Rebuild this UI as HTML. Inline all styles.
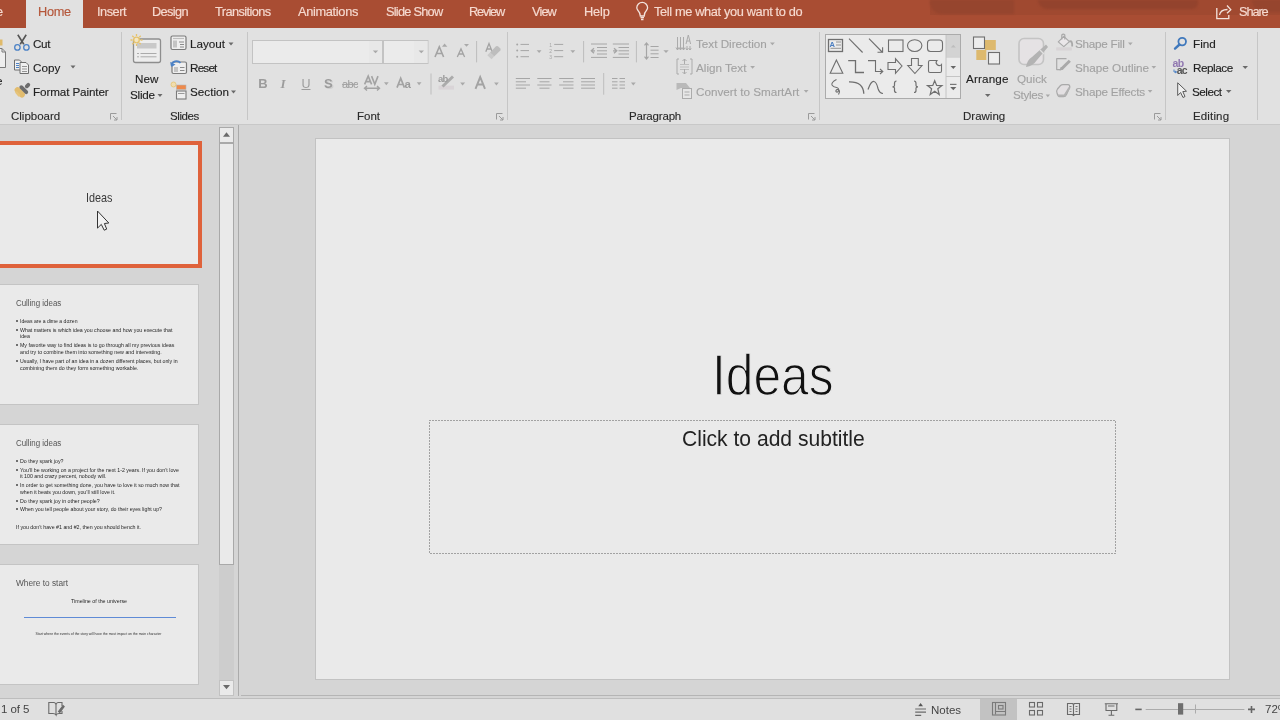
<!DOCTYPE html>
<html><head><meta charset="utf-8">
<style>
*{box-sizing:border-box}
html,body{margin:0;padding:0}
body{width:1280px;height:720px;overflow:hidden;position:relative;background:#D5D5D5;font-family:"Liberation Sans",sans-serif;color:#262626}
.a{position:absolute}
.t{position:absolute;white-space:nowrap;line-height:1}
#tabs{left:0;top:0;width:1280px;height:28px;background:#A94D33}
.tab{position:absolute;top:5.5px;font-size:12.8px;-webkit-text-stroke:0.15px;color:#F6DAD0;white-space:nowrap;line-height:1}
#ribbon{left:0;top:28px;width:1280px;height:96px;background:#E1E1E1}
.sep{position:absolute;top:32px;width:1px;height:88px;background:#C6C6C6}
.gl{position:absolute;top:111px;font-size:11.5px;color:#2A2A2A;white-space:nowrap;line-height:1;-webkit-text-stroke:0.12px}
.rl{position:absolute;font-size:11.7px;color:#222;white-space:nowrap;line-height:1;-webkit-text-stroke:0.12px}
.dis{color:#A2A2A2}
.dd{position:absolute;width:0;height:0;border-left:2.5px solid transparent;border-right:2.5px solid transparent;border-top:3px solid #6A6A6A}
.dd.g{border-top-color:#B5B5B5}
.launch{position:absolute;top:113px;width:8px;height:8px}
svg{position:absolute;overflow:visible}
#root{position:absolute;left:0;top:0;width:1280px;height:720px;overflow:hidden;background:#D5D5D5;will-change:transform}
</style></head>
<body>
<div id="root">
<!-- TAB BAR -->
<div id="tabs" class="a">
  <div class="a" style="left:930px;top:0;width:350px;height:15px;background:#A04930;filter:blur(0.6px)"></div>
  <div class="a" style="left:930px;top:0;width:84px;height:14px;background:#96452E;border-radius:0 0 0 12px;filter:blur(0.8px)"></div>
  <div class="a" style="left:1038px;top:0;width:160px;height:9px;background:#93432D;border-radius:0 0 40px 60px;filter:blur(0.8px)"></div>
  <div class="a" style="left:1252px;top:0;width:30px;height:12px;background:#96452E;border-radius:0 0 0 14px;filter:blur(0.8px)"></div>
  <div class="tab" style="left:-4px">e</div>
  <div class="a" style="left:26px;top:0;width:57px;height:28px;background:#E1E1E1"></div>
  <div class="tab" style="left:38px;color:#B5573B;letter-spacing:-0.36px">Home</div>
  <div class="tab" style="left:97px;letter-spacing:-0.49px">Insert</div>
  <div class="tab" style="left:152px;letter-spacing:-0.64px">Design</div>
  <div class="tab" style="left:215px;letter-spacing:-0.59px">Transitions</div>
  <div class="tab" style="left:298px;letter-spacing:-0.33px">Animations</div>
  <div class="tab" style="left:386px;letter-spacing:-0.76px">Slide Show</div>
  <div class="tab" style="left:469px;letter-spacing:-1.12px">Review</div>
  <div class="tab" style="left:532px;letter-spacing:-0.88px">View</div>
  <div class="tab" style="left:584px;letter-spacing:-0.14px">Help</div>
  <div class="tab" style="left:654px;letter-spacing:-0.36px">Tell me what you want to do</div>
  <div class="tab" style="left:1239px;letter-spacing:-1.12px">Share</div>
</div>
<!-- RIBBON -->
<div id="ribbon" class="a"></div>
<div class="a" style="left:0;top:124px;width:1280px;height:1px;background:#C8C8C8"></div>

<div class="sep" style="left:121px"></div>
<div class="sep" style="left:247px"></div>
<div class="sep" style="left:507px"></div>
<div class="sep" style="left:819px"></div>
<div class="sep" style="left:1165px"></div>
<div class="sep" style="left:1257px"></div>

<div class="gl" style="left:11px">Clipboard</div>
<div class="gl" style="left:170px;letter-spacing:-0.4px">Slides</div>
<div class="gl" style="left:357px">Font</div>
<div class="gl" style="left:629px;letter-spacing:-0.18px">Paragraph</div>
<div class="gl" style="left:963px">Drawing</div>
<div class="gl" style="left:1193px;letter-spacing:0.15px">Editing</div>

<div class="rl" style="left:-4px;top:75px">e</div>
<div class="rl" style="left:33px;top:38px;letter-spacing:-0.4px">Cut</div>
<div class="rl" style="left:33px;top:62px">Copy</div>
<div class="rl" style="left:33px;top:86px;letter-spacing:-0.12px">Format Painter</div>
<div class="rl" style="left:135px;top:73px">New</div>
<div class="rl" style="left:130px;top:89px;letter-spacing:-0.25px">Slide</div>
<div class="rl" style="left:190px;top:38px">Layout</div>
<div class="rl" style="left:190px;top:62px;letter-spacing:-0.8px">Reset</div>
<div class="rl" style="left:190px;top:86px">Section</div>
<div class="rl dis" style="left:696px;top:38px">Text Direction</div>
<div class="rl dis" style="left:696px;top:62px">Align Text</div>
<div class="rl dis" style="left:696px;top:86px">Convert to SmartArt</div>
<div class="rl" style="left:966px;top:73px;letter-spacing:0.15px">Arrange</div>
<div class="rl dis" style="left:1017px;top:73px">Quick</div>
<div class="rl dis" style="left:1013px;top:89px;letter-spacing:-0.3px">Styles</div>
<div class="rl dis" style="left:1075px;top:38px;letter-spacing:-0.25px">Shape Fill</div>
<div class="rl dis" style="left:1075px;top:62px">Shape Outline</div>
<div class="rl dis" style="left:1075px;top:86px;letter-spacing:-0.2px">Shape Effects</div>
<div class="rl" style="left:1193px;top:38px">Find</div>
<div class="rl" style="left:1193px;top:62px;letter-spacing:-0.45px">Replace</div>
<div class="rl" style="left:1192px;top:86px;letter-spacing:-0.5px">Select</div>


<!-- RIBBON ICONS -->
<svg class="a" style="left:0;top:0" width="1280" height="720" viewBox="0 0 1280 720">
<g fill="none" stroke-linecap="butt">
<!-- paste (clipped) -->
<rect x="-4" y="39.5" width="6.5" height="6" fill="#E0BA6A"/>
<path d="M-3 48.5 H2 L5.5 52 V67.5 H-3 Z" fill="#EEEEEE" stroke="#7A7A7A" stroke-width="1"/>
<path d="M2 48.5 V52 H5.5" stroke="#7A7A7A" stroke-width="1"/>
<!-- scissors -->
<path d="M17.8 34.8 L23.8 44.2 M26.2 34.8 L20.2 44.2" stroke="#555" stroke-width="1.6"/>
<circle cx="17.4" cy="47.4" r="2.7" stroke="#4C82C6" stroke-width="1.3"/>
<circle cx="26.4" cy="47.4" r="2.7" stroke="#4C82C6" stroke-width="1.3"/>
<!-- copy -->
<path d="M14.5 60 H19.5 L21.5 62 V70 H14.5 Z" fill="#F0F0F0" stroke="#6E6E6E" stroke-width="1"/>
<path d="M16 63.5 H19 M16 65.5 H19 M16 67.5 H19" stroke="#4C82C6" stroke-width="1"/>
<path d="M20 62.5 H26 L28.5 65 V73.5 H20 Z" fill="#F0F0F0" stroke="#6E6E6E" stroke-width="1"/>
<path d="M22 66.5 H27 M22 69 H27 M22 71.5 H27" stroke="#7E7E7E" stroke-width="0.8"/>
<!-- format painter -->
<path d="M17.5 90 L22 94.6" stroke="#E2BC6E" stroke-width="5.8" stroke-linecap="round"/>
<path d="M16.5 92.5 L19 95.3" stroke="#E6C47C" stroke-width="2.5" stroke-linecap="round"/>
<path d="M21.3 87.2 L26.3 92.2" stroke="#6C6C6C" stroke-width="3.8" stroke-linecap="round"/>
<path d="M26.8 86.3 L28.3 84.8" stroke="#6C6C6C" stroke-width="3.8" stroke-linecap="round"/>
<!-- dialog launchers -->
<g stroke="#9A9A9A" stroke-width="1">
<path d="M110.5 119.5 V113.5 H116.5 M113 116 L117 120 M117 117 V120 H114"/>
<path d="M496.5 119.5 V113.5 H502.5 M499 116 L503 120 M503 117 V120 H500"/>
<path d="M808.5 119.5 V113.5 H814.5 M811 116 L815 120 M815 117 V120 H812"/>
<path d="M1154.5 119.5 V113.5 H1160.5 M1157 116 L1161 120 M1161 117 V120 H1158"/>
</g>
<!-- new slide -->
<rect x="133.5" y="39" width="27" height="23.5" rx="2" fill="#EDEDED" stroke="#8E8E8E" stroke-width="1.3"/>
<rect x="137" y="43" width="19.5" height="5.5" fill="#C9C9C9"/>
<path d="M137 53.5 H139 M140.5 53.5 H156.5 M137 56.8 H139 M140.5 56.8 H156.5" stroke="#ABABAB" stroke-width="1"/>
<g stroke="#E6C36C" stroke-width="1.3">
<circle cx="136.5" cy="40" r="2.8" fill="#F3E6C3"/>
<path d="M136.5 34 V36 M136.5 44 V46 M130.5 40 H132.5 M140.5 40 H142.5 M132.3 35.8 L133.7 37.2 M139.3 42.8 L140.7 44.2 M140.7 35.8 L139.3 37.2 M133.7 42.8 L132.3 44.2"/>
</g>
<!-- layout -->
<rect x="171" y="36" width="15" height="13.5" rx="1.5" fill="#EFEFEF" stroke="#7A7A7A" stroke-width="1.2"/>
<path d="M173 38.5 H184" stroke="#BDBDBD" stroke-width="1.2"/>
<rect x="173" y="40.5" width="4" height="7" fill="#C4C4C4"/>
<path d="M179 42 H184 M180 44.5 H184 M180 47 H184" stroke="#8A8A8A" stroke-width="1"/>
<!-- reset -->
<rect x="172" y="62" width="14.5" height="11.5" rx="1.5" fill="#EFEFEF" stroke="#7A7A7A" stroke-width="1.2"/>
<rect x="174" y="67" width="4" height="5" fill="#C4C4C4"/>
<path d="M180 67.5 H184.5 M180 70.5 H184.5" stroke="#8A8A8A" stroke-width="1"/>
<path d="M171.5 65.5 A5 4.5 0 0 1 180.5 63" stroke="#4C82C6" stroke-width="1.8" fill="none"/>
<path d="M170 62 L171.5 67 L175.5 64.5 Z" fill="#4C82C6"/>
<!-- section -->
<circle cx="173.5" cy="84.5" r="2.5" fill="#F0DDB0" stroke="#E6C36C" stroke-width="0.8"/>
<rect x="176.5" y="85" width="9.5" height="4.5" fill="#EE8A4C" stroke="#B5B5B5" stroke-width="0.6"/>
<rect x="176.5" y="91" width="9.5" height="8" fill="#EFEFEF" stroke="#7A7A7A" stroke-width="1.1"/>
<path d="M178 93.5 H184.5" stroke="#9A9A9A" stroke-width="1"/>
</g>
<!-- dropdown arrows enabled -->
<g fill="#6A6A6A">
<path d="M70.5 65.5 H75.5 L73 68.5 Z"/>
<path d="M157.5 94 H162.5 L160 97 Z"/>
<path d="M228.5 42.5 H233.5 L231 45.5 Z"/>
<path d="M231 90.5 H236 L233.5 93.5 Z"/>
<path d="M985 94 H990.5 L987.7 97 Z"/>
<path d="M1242.5 66 H1248 L1245.2 69 Z"/>
<path d="M1226 90 H1231.5 L1228.7 93 Z"/>
</g>
</svg>


<!-- FONT GROUP -->
<svg class="a" style="left:0;top:0" width="1280" height="720" viewBox="0 0 1280 720">
<rect x="252.5" y="40.5" width="130" height="23" fill="#EBEBEB" stroke="#C3C3C3" stroke-width="1"/>
<rect x="369" y="41" width="13" height="22" fill="#E8E8E8"/>
<rect x="383.5" y="40.5" width="44.5" height="23" fill="#EBEBEB" stroke="#C3C3C3" stroke-width="1"/>
<rect x="414" y="41" width="13.5" height="22" fill="#E8E8E8"/>
<g fill="#A9A9A9">
<path d="M372.8 50.5 H378.2 L375.5 53.3 Z"/>
<path d="M418.6 50.5 H424 L421.3 53.3 Z"/>
<path d="M442 46.8 L444.6 43.6 L447.3 46.8 Z"/>
<path d="M464 43.9 H469 L466.5 46.8 Z"/>
<path d="M536.7 50.3 H541.5 L539.1 53 Z"/>
<path d="M570.4 50.3 H575.2 L572.8 53 Z"/>
<path d="M663.4 50.3 H668.7 L666 53 Z"/>
<path d="M384 82.2 H388.7 L386.3 85.3 Z"/>
<path d="M416.8 82.2 H421.5 L419.1 85.3 Z"/>
<path d="M460.2 82.4 H465.1 L462.6 85.5 Z"/>
<path d="M494.1 82.4 H498.8 L496.4 85.5 Z"/>
<path d="M631 82.4 H635.7 L633.3 85.5 Z"/>
<path d="M770 42.5 H774.8 L772.4 45.3 Z"/>
<path d="M750.2 66 H755 L752.6 68.8 Z"/>
<path d="M803.8 90 H808.5 L806.1 92.8 Z"/>
<path d="M1128 42.5 H1132.7 L1130.3 45.3 Z"/>
<path d="M1151.5 66 H1156.2 L1153.8 68.8 Z"/>
<path d="M1147.8 90 H1152.4 L1150.1 92.8 Z"/>
<path d="M1045.7 94.5 H1050 L1047.8 97.3 Z"/>
</g>
<g fill="none" stroke="#A3A3A3">
<path d="M435 57 L439.3 46.8 L443.6 57 M436.6 53.5 H442" stroke-width="1.6"/>
<path d="M457.3 57 L461 48.9 L464.6 57 M458.6 54 H463.4" stroke-width="1.3"/>
<path d="M476.6 41 V62.4" stroke="#BDBDBD" stroke-width="1"/>
<path d="M485.8 51.8 L489 43.6 L492.2 51.8 M487 49 H491" stroke-width="1.3"/>
<path d="M490 52.5 L496 46.3 Q497 45.5 498 46.3 L500.3 48.6 Q501 49.5 500.3 50.4 L494.2 56.6 Z" fill="#BDBDBD" stroke="none"/>
<path d="M487.3 55.2 L490 52.5 L494.2 56.6 L491.5 59.3 Z" fill="#CACACA" stroke="none"/>
<path d="M431 73.5 V94.5" stroke="#BDBDBD" stroke-width="1"/>
<path d="M364.6 84.4 L368.2 76.1 L371.6 84.4 M365.8 81.6 H370.4 M371.6 76.1 L374.8 84.4 L378 76.1" stroke-width="1.6"/>
<path d="M364.5 88.3 H379.5 M367 86 L364.5 88.3 L367 90.6 M377 86 L379.5 88.3 L377 90.6" stroke-width="1.4"/>
<path d="M397 87.6 L400.7 78.3 L404.4 87.6 M398.3 84.5 H403" stroke-width="1.7"/>
<path d="M438.5 87.6 H454" stroke="#D9D4D7" stroke-width="4"/>
<path d="M442.5 86.5 L453 76.5" stroke="#ABABAB" stroke-width="3"/>
<path d="M475.5 88.8 L480.2 77.1 L485 88.8 M477.2 84.5 H483.2" stroke-width="1.9"/>
</g>
<g font-family="Liberation Sans" fill="#9C9C9C">
<text x="258.3" y="87.7" font-size="13" font-weight="bold">B</text>
<text x="280.5" y="87.7" font-size="13" font-style="italic" font-weight="bold" font-family="Liberation Serif">I</text>
<text x="301.5" y="87.7" font-size="12.5">U</text>
<text x="325.2" y="89.3" font-size="13" font-weight="bold" fill="#CFCFCF">S</text><text x="324" y="88" font-size="13" font-weight="bold">S</text>
<text x="342" y="87.6" font-size="11" letter-spacing="-0.6">abc</text>
<text x="404.6" y="87.6" font-size="11.5" font-weight="bold">a</text>
<text x="438" y="82.4" font-size="9.5" font-weight="bold" letter-spacing="-0.8">ab</text>
</g>
<path d="M301.5 89.5 H310.5" stroke="#9C9C9C" stroke-width="1"/>
<path d="M342 84.4 H358" stroke="#A3A3A3" stroke-width="1"/>
<!-- paragraph -->
<g fill="#A6A6A6">
<circle cx="517.2" cy="44.4" r="1"/><circle cx="517.2" cy="50.6" r="1"/><circle cx="517.2" cy="56.7" r="1"/>
</g>
<g stroke="#A6A6A6" stroke-width="1" fill="none">
<path d="M520.5 44.4 H529 M520.5 50.6 H529 M520.5 56.7 H529"/>
<path d="M554.2 44.4 H563.2 M554.2 50.6 H563.2 M554.2 56.7 H563.2"/>
<path d="M583.6 41 V62.4 M636.4 41 V62.4 M603.7 73 V94.7" stroke="#BDBDBD"/>
<path d="M591 44 H607 M597 47.5 H607 M597 50.8 H607 M597 54 H607 M591 57.4 H607"/>
<path d="M595 50.8 H591.5 M594 48.3 L591.3 50.8 L594 53.3" stroke-width="1.3"/>
<path d="M612.8 44 H629 M618.5 47.5 H629 M618.5 50.8 H629 M618.5 54 H629 M612.8 57.4 H629"/>
<path d="M613 50.8 H616.5 M614 48.3 L616.8 50.8 L614 53.3" stroke-width="1.3"/>
<path d="M650.5 46.5 H658.6 M650.5 50.2 H658.6 M650.5 53.8 H658.6 M650.5 57.5 H658.6"/>
<path d="M646.5 43 V59 M644.5 45.3 L646.5 43 L648.5 45.3 M644.5 56.7 L646.5 59 L648.5 56.7" stroke-width="1.2"/>
<path d="M515.8 78.5 H530 M515.8 81.8 H526 M515.8 85 H530 M515.8 88.2 H526"/>
<path d="M537.3 78.5 H551.5 M539.5 81.8 H549.5 M537.3 85 H551.5 M539.5 88.2 H549.5"/>
<path d="M559.2 78.5 H573.5 M563 81.8 H573.5 M559.2 85 H573.5 M563 88.2 H573.5"/>
<path d="M581.1 78.5 H595 M581.1 81.8 H595 M581.1 85 H595 M581.1 88.2 H595"/>
<path d="M612 78.5 H617.5 M612 81.8 H617.5 M612 85 H617.5 M612 88.2 H617.5 M619.5 78.5 H625 M619.5 81.8 H625 M619.5 85 H625 M619.5 88.2 H625"/>
</g>
<g font-family="Liberation Sans" fill="#A6A6A6" font-size="5">
<text x="549.2" y="46.5">1</text><text x="549.2" y="52.5">2</text><text x="549.2" y="58.5">3</text>
</g>
<!-- text direction / align text / smartart icons -->
<g stroke="#ABABAB" stroke-width="1" fill="none">
<path d="M677.5 37 V50 M680.5 37 V50 M683.5 37 V50 M676 47.5 L677.5 50 L679 47.5 M679 47.5 L680.5 50 L682 47.5 M682 47.5 L683.5 50 L685 47.5"/>
<path d="M686 44 L688.3 35 L690.6 44 M686.8 41 H689.8"/>
<path d="M687 46 V50 M690 46 V50 M685.8 48.3 L687 50 L688.2 48.3 M688.8 48.3 L690 50 L691.2 48.3"/>
<path d="M679 59 H677 V74 H679 M690 59 H692 V74 H690"/>
<path d="M680 64.5 H689 M680 67 H689 M680 69.5 H689" stroke="#BFBFBF"/>
<path d="M684.5 59 V64 M682.5 61 L684.5 59 L686.5 61 M684.5 69 V74 M682.5 72 L684.5 74 L686.5 72"/>
<rect x="682.5" y="88.5" width="9" height="10" fill="#E6E6E6"/>
<path d="M684.5 92 H689.5 M684.5 95 H689.5" />
</g>
<path d="M676.5 83 H686 L690 88 H681 L676.5 90 Z" fill="#B9B9B9"/>
</svg>


<!-- DRAWING / EDITING / TAB ICONS -->
<svg class="a" style="left:0;top:0" width="1280" height="720" viewBox="0 0 1280 720">
<rect x="825.5" y="34.5" width="135" height="64" fill="#EBEBEB" stroke="#ABABAB" stroke-width="1"/>
<rect x="946" y="35" width="14" height="21.5" fill="#D3D3D3"/>
<path d="M946 35 V98 M946 57 H960 M946 76.5 H960" stroke="#C4C4C4" stroke-width="1"/>
<path d="M950.8 47.5 L953.3 44.8 L955.8 47.5 Z" fill="#BDBDBD"/>
<path d="M950.5 66 H956 L953.3 69 Z" fill="#666"/>
<path d="M950 84.4 H956.5" stroke="#777" stroke-width="1.2"/>
<path d="M950.2 87 H956.3 L953.3 90.3 Z" fill="#666"/>
<g fill="none" stroke="#6F6F6F" stroke-width="1.1">
<rect x="828.5" y="39.5" width="14" height="12" stroke-width="1.3"/>
<path d="M836 42 H841 M836 45 H841 M830.5 48.3 H841" stroke="#8A8A8A" stroke-width="0.9"/>
<path d="M849 38.6 L862.6 52.5"/>
<path d="M869 38.6 L882.6 52.5 M877.5 52.3 H882.6 V47.2"/>
<rect x="888.5" y="40" width="14.5" height="11.5"/>
<ellipse cx="914.7" cy="45.6" rx="7.2" ry="5.9"/>
<rect x="927.5" y="40" width="15" height="11.5" rx="3"/>
<path d="M836.4 60 L830.2 73.2 H842.8 Z"/>
<path d="M848.2 60.6 H855.5 V72.5 H864" stroke-width="1.3"/>
<path d="M868 60.6 H875.5 V71.5 H882.5 M880 69 L882.8 71.5 L880 74"/>
<path d="M888 62.5 H895.5 V58.8 L902 66 L895.5 73.3 V69.5 H888 Z"/>
<path d="M911.5 58.5 H918.3 V65.5 H922 L914.9 73.5 L907.8 65.5 H911.5 Z"/>
<path d="M930 60.5 H937 A3 3 0 0 0 941.5 64.5 V71 Q941.5 72.5 940 72.5 H930 Q928.5 72.5 928.5 71 V62 Q928.5 60.5 930 60.5 Z"/>
<path d="M836.5 79.5 Q831 82.5 832 85 Q833 87 836.5 87.5 Q839 88 838.5 90.5 Q838 92.5 836.5 92 Q835 91 837 89.5 Q839.5 89 839.5 92 L838.5 94.5" stroke-width="1.1"/>
<path d="M849 81.8 Q863.5 81.5 863.8 93.8" stroke-width="1.3"/>
<path d="M868 89.5 Q871 81 874 81.5 Q876.5 82 878 88.5 Q879.5 93.5 883 93.5" stroke-width="1.2"/>
<path d="M896.5 81 Q894.5 81 894.5 83.5 V85.5 Q894.5 86.8 892.5 86.8 Q894.5 86.8 894.5 88 V90.5 Q894.5 92.5 896.5 92.5" stroke-width="1.2"/>
<path d="M914 81 Q916 81 916 83.5 V85.5 Q916 86.8 918 86.8 Q916 86.8 916 88 V90.5 Q916 92.5 914 92.5" stroke-width="1.2"/>
<path d="M934.7 80.6 L936.6 85.5 L941.9 85.6 L937.8 88.7 L939.2 94.6 L934.7 91.3 L930.2 94.6 L931.6 88.7 L927.5 85.6 L932.8 85.5 Z" stroke-width="1.2"/>
</g>
<text x="829.5" y="46.5" font-family="Liberation Sans" font-size="7.5" font-weight="bold" fill="#4A7DC0">A</text>
<!-- arrange -->
<rect x="984.8" y="40" width="11" height="10" fill="#DDB96E"/>
<rect x="976.3" y="50" width="10" height="10" fill="#DDB96E"/>
<rect x="973.5" y="37" width="11" height="11.5" fill="#EDEDED" stroke="#6E6E6E" stroke-width="1.1"/>
<rect x="988.5" y="52.5" width="11" height="11.5" fill="#EDEDED" stroke="#6E6E6E" stroke-width="1.1"/>
<!-- quick styles -->
<rect x="1019" y="38.5" width="24.5" height="26" rx="5" fill="#E5E2E4" stroke="#C4C4C4" stroke-width="1.6"/>
<path d="M1026 67 Q1027 60 1032 57 L1046 44.5 L1048 47 L1037 60 Q1033 66 1026 67 Z" fill="#B3B3B3"/>
<path d="M1040 50 L1044 54" stroke="#E1E1E1" stroke-width="1.2"/>
<!-- shape fill / outline / effects -->
<g fill="none" stroke="#A9A9A9" stroke-width="1.2" stroke-linejoin="round">
<path d="M1058.3 41.9 L1063.8 36.4 L1069.4 41.6 L1063.8 46.6 Z" fill="#EAE7E9"/>
<path d="M1061.8 39.5 V35 Q1063.3 33.2 1064.8 35 V39.5"/>
<path d="M1069.4 41.6 Q1072.5 40 1072.2 46.5" stroke-width="1.8"/>
<path d="M1066.5 58.6 H1056.7 V69.6 H1060"/>
<path d="M1061.5 69 L1069.8 60.7" stroke-width="3"/>
<path d="M1060.2 70 L1061.2 67.6 L1062.6 69 Z" fill="#A9A9A9"/>
<path d="M1057 93 Q1056 91 1057.5 89 L1060.5 85.5 Q1061.5 84.6 1063 84.6 H1068 Q1070 84.8 1069.8 87.2 L1066.5 94.5 Q1065.5 96.7 1063.5 96.7 H1059.5 Q1058 96.5 1057 93 Z" fill="#E3E0E2"/>
<path d="M1058 95.5 L1064.5 95.5 L1069.5 87.5" stroke="#B3B3B3" stroke-width="2"/>
</g>
<rect x="1056.2" y="47.3" width="15.6" height="3.2" fill="#D8D4D6"/>
<!-- editing -->
<circle cx="1182.2" cy="41.6" r="3.8" fill="none" stroke="#3F78BC" stroke-width="1.8"/>
<path d="M1179.5 44.5 L1175 48.6" stroke="#3F78BC" stroke-width="2.4" stroke-linecap="round"/>
<text x="1172.6" y="67.3" font-family="Liberation Sans" font-size="10.5" font-weight="bold" fill="#9077B0" letter-spacing="-0.8">ab</text>
<text x="1176.8" y="74.2" font-family="Liberation Sans" font-size="10.5" font-weight="bold" fill="#555" letter-spacing="-0.8">ac</text>
<path d="M1174 69.5 V72 H1176.5 M1175 71 L1176.5 72 L1175 73" stroke="#4C82C6" stroke-width="1" fill="none"/>
<path d="M1177.7 82.8 V95.5 L1180.6 92.5 L1183 97.5 L1185 96.5 L1182.8 91.6 L1186.5 91.2 Z" fill="#F0F0F0" stroke="#5A5A5A" stroke-width="1"/>
<!-- tab bar: lightbulb, share -->
<g fill="none" stroke="#F3E3DD" stroke-width="1.3">
<path d="M640.3 16 Q640 12.5 638 10.5 Q636.7 8.7 636.8 7.8 A5.4 5.4 0 0 1 647.6 7.8 Q647.7 8.7 646.4 10.5 Q644.4 12.5 644.2 16 Z"/>
<path d="M640.5 17.7 H644 M641 19.5 H643.5"/>
<path d="M1216.8 8 V18.7 H1228.8 V15"/>
<path d="M1219.5 15 Q1220.5 9.5 1227.5 9.5 M1227 5.5 L1230.8 9.6 L1227 13.2"/>
</g>
</svg>

<!-- SLIDE PANEL -->
<div class="a" style="left:-4px;top:141px;width:206px;height:127px;border:4px solid #DF623B;background:#EAEAEA"></div>
<div class="t" style="left:86px;top:191px;font-size:13.2px;color:#3A3A3A;transform:scaleX(0.82);transform-origin:0 0">Ideas</div>
<svg class="a" style="left:0;top:0" width="240" height="720"><path d="M97.5 211 V228.1 L101.3 224.4 L104.2 230.2 L106.7 229.1 L104.4 223.5 L108.8 223 Z" fill="#F2F2F2" stroke="#333" stroke-width="1" stroke-linejoin="round"/></svg>

<div class="a" style="left:-3px;top:284px;width:202px;height:121px;border:1px solid #C4C4C4;background:#EAEAEA"></div>
<div class="a" style="left:-3px;top:424px;width:202px;height:121px;border:1px solid #C4C4C4;background:#EAEAEA"></div>
<div class="a" style="left:-3px;top:564px;width:202px;height:121px;border:1px solid #C4C4C4;background:#EAEAEA"></div>

<!-- thumbnails content -->
<div class="t" style="left:15.6px;top:298.5px;font-size:8.5px;color:#555;transform:scaleX(0.93);transform-origin:0 0">Culling ideas</div>
<div class="a" style="left:16px;top:320px;width:2px;height:2px;background:#707070"></div>
<div class="t" style="left:20px;top:319.3px;font-size:5.1px;color:#262626">Ideas are a dime a dozen</div>
<div class="a" style="left:16px;top:329px;width:2px;height:2px;background:#707070"></div>
<div class="t" style="left:20px;top:327.5px;font-size:5.25px;color:#262626">What matters is which idea you choose and how you execute that</div>
<div class="t" style="left:20px;top:333.8px;font-size:5.25px;color:#262626">idea</div>
<div class="a" style="left:16px;top:344px;width:2px;height:2px;background:#707070"></div>
<div class="t" style="left:20px;top:343.2px;font-size:5.25px;color:#262626">My favorite way to find ideas is to go through all my previous ideas</div>
<div class="t" style="left:20px;top:349.7px;font-size:5.3px;color:#262626">and try to combine them into something new and interesting.</div>
<div class="a" style="left:16px;top:360px;width:2px;height:2px;background:#707070"></div>
<div class="t" style="left:20px;top:359.1px;font-size:5.23px;color:#262626">Usually, I have part of an idea in a dozen different places, but only in</div>
<div class="t" style="left:20px;top:365.5px;font-size:5.3px;color:#262626">combining them do they form something workable.</div>
<div class="t" style="left:15.6px;top:438.5px;font-size:8.5px;color:#555;transform:scaleX(0.93);transform-origin:0 0">Culling ideas</div>
<div class="a" style="left:16px;top:460px;width:2px;height:2px;background:#707070"></div>
<div class="t" style="left:20px;top:459.0px;font-size:5.25px;color:#262626">Do they spark joy?</div>
<div class="a" style="left:16px;top:469px;width:2px;height:2px;background:#707070"></div>
<div class="t" style="left:20px;top:467.5px;font-size:5.25px;color:#262626">You’ll be working on a project for the next 1-2 years. If you don’t love</div>
<div class="t" style="left:20px;top:473.8px;font-size:5.25px;color:#262626">it 100 and crazy percent, nobody will.</div>
<div class="a" style="left:16px;top:484px;width:2px;height:2px;background:#707070"></div>
<div class="t" style="left:20px;top:482.8px;font-size:5.25px;color:#262626">In order to get something done, you have to love it so much now that</div>
<div class="t" style="left:20px;top:489.5px;font-size:5.25px;color:#262626">when it beats you down, you’ll still love it.</div>
<div class="a" style="left:16px;top:500px;width:2px;height:2px;background:#707070"></div>
<div class="t" style="left:20px;top:498.7px;font-size:5.25px;color:#262626">Do they spark joy in other people?</div>
<div class="a" style="left:16px;top:508px;width:2px;height:2px;background:#707070"></div>
<div class="t" style="left:20px;top:506.8px;font-size:5.25px;color:#262626">When you tell people about your story, do their eyes light up?</div>
<div class="t" style="left:16px;top:524.7px;font-size:5.27px;color:#262626">If you don’t have #1 and #2, then you should bench it.</div>
<div class="t" style="left:16px;top:578.5px;font-size:8.3px;color:#555">Where to start</div>
<div class="t" style="left:71px;top:599.1px;font-size:5.3px;color:#262626">Timeline of the universe</div>
<div class="a" style="left:24px;top:616.5px;width:152px;height:1px;background:#5F8BD6"></div>
<div class="t" style="left:35.5px;top:632.7px;font-size:3.44px;color:#333">Start where the events of the story will have the most impact on the main character</div>

<!-- scrollbar -->
<div class="a" style="left:219px;top:127px;width:15px;height:569px;background:#CDCDCD"></div>
<div class="a" style="left:219px;top:127px;width:15px;height:16px;background:#EAEAEA;border:1px solid #A9A9A9"></div>
<div class="a" style="left:219px;top:143px;width:15px;height:422px;background:#EAEAEA;border:1px solid #A9A9A9"></div>
<div class="a" style="left:219px;top:680px;width:15px;height:16px;background:#EAEAEA;border:1px solid #C2C2C2"></div>
<div class="a" style="left:238px;top:125px;width:1px;height:571px;background:#ABABAB"></div>
<div class="a" style="left:241px;top:695px;width:1039px;height:1px;background:#B5B5B5"></div>

<svg class="a" style="left:0;top:0" width="240" height="720"><path d="M223 136.7 L226.5 132.3 L230 136.7 Z" fill="#6A6A6A"/>
<path d="M223 685 H230 L226.5 689.3 Z" fill="#6A6A6A"/></svg>
<!-- MAIN SLIDE -->
<div class="a" style="left:315px;top:138px;width:915px;height:542px;border:1px solid #C2C2C2;background:#EAEAEA"></div>
<div class="t" style="left:712px;top:347px;font-size:57.6px;color:#111;transform:scaleX(0.863);transform-origin:0 0;-webkit-text-stroke:1.3px #EAEAEA">Ideas</div>
<div class="t" style="left:682px;top:428px;font-size:22.3px;color:#222;transform:scaleX(0.945);transform-origin:0 0">Click to add subtitle</div>
<svg class="a" style="left:0;top:0" width="1280" height="720"><rect x="429.5" y="420.5" width="686" height="133" fill="none" stroke="#5A5A5A" stroke-width="1" stroke-dasharray="1 2"/></svg>

<!-- STATUS BAR -->
<div class="a" style="left:0;top:698px;width:1280px;height:1px;background:#BDBDBD"></div>
<div class="a" style="left:0;top:699px;width:1280px;height:21px;background:#E0E0E0"></div>
<div class="t" style="left:1px;top:704px;font-size:11.5px;color:#444;letter-spacing:-0.1px">1 of 5</div>
<div class="t" style="left:931px;top:704.5px;font-size:11.5px;color:#444">Notes</div>
<div class="a" style="left:980px;top:699px;width:37px;height:21px;background:#C2C2C2"></div>

<svg class="a" style="left:0;top:0" width="1280" height="720" viewBox="0 0 1280 720">
<g fill="none" stroke="#6A6A6A" stroke-width="1.1">
<path d="M48.8 702.5 H54 Q56 703 56 704.5 V715 Q55 713.5 53 713.5 H48.8 Z"/>
<path d="M56 704.5 Q56 703 58 702.5 H62 V706 M56 715 Q57 713.5 59 713.5 H62 V711"/>
<path d="M58.5 711.5 L63 705.5 L64.2 706.5 L59.8 712.5 Z" fill="#6A6A6A"/>
<path d="M915.2 709 H926 M915.2 712.1 H926 M915.2 715.3 H921.2" stroke-width="1.2"/>
<path d="M918.3 706.3 L920.6 703 L923 706.3 Z" fill="#555" stroke="none"/>
<rect x="992.5" y="702.5" width="13" height="12.5" stroke="#7A7A7A"/>
<path d="M995.5 703 V714.5 M995.5 711.5 H1005.5" stroke="#7A7A7A"/>
<rect x="998.5" y="705.5" width="4.5" height="3.5" stroke="#7A7A7A"/>
<rect x="1029.5" y="702.5" width="5" height="4.5"/><rect x="1037.5" y="702.5" width="5" height="4.5"/>
<rect x="1029.5" y="710.5" width="5" height="4.5"/><rect x="1037.5" y="710.5" width="5" height="4.5"/>
<path d="M1067.5 703.5 H1072.5 L1073.5 704.5 L1074.5 703.5 H1079.5 V714.5 H1074.5 L1073.5 715.5 L1072.5 714.5 H1067.5 Z M1073.5 704.5 V715.5"/>
<path d="M1069.5 706.5 H1071.5 M1069.5 709 H1071.5 M1069.5 711.5 H1071.5 M1075.5 706.5 H1077.5 M1075.5 709 H1077.5 M1075.5 711.5 H1077.5" stroke-width="0.9"/>
<path d="M1104.8 703.7 H1118 M1106 704 V710.5 H1116.8 V704 M1111.4 710.5 V715 M1108.5 715.3 H1114.3"/>
<path d="M1108 706 H1114.5" stroke-width="1"/>
</g>
<path d="M1135.3 709.4 H1141.7" stroke="#666" stroke-width="1.6"/>
<path d="M1145.7 709.5 H1244.4" stroke="#ABABAB" stroke-width="1"/>
<path d="M1195.5 704.5 V713.5" stroke="#ABABAB" stroke-width="1"/>
<rect x="1178" y="703.2" width="5.2" height="11.4" fill="#6E6E6E"/>
<path d="M1248 709.4 H1255 M1251.5 706 V712.9" stroke="#666" stroke-width="1.6"/>
</svg>
<div class="t" style="left:1265px;top:704px;font-size:11.5px;color:#444">72%</div>
</div>
</body></html>
